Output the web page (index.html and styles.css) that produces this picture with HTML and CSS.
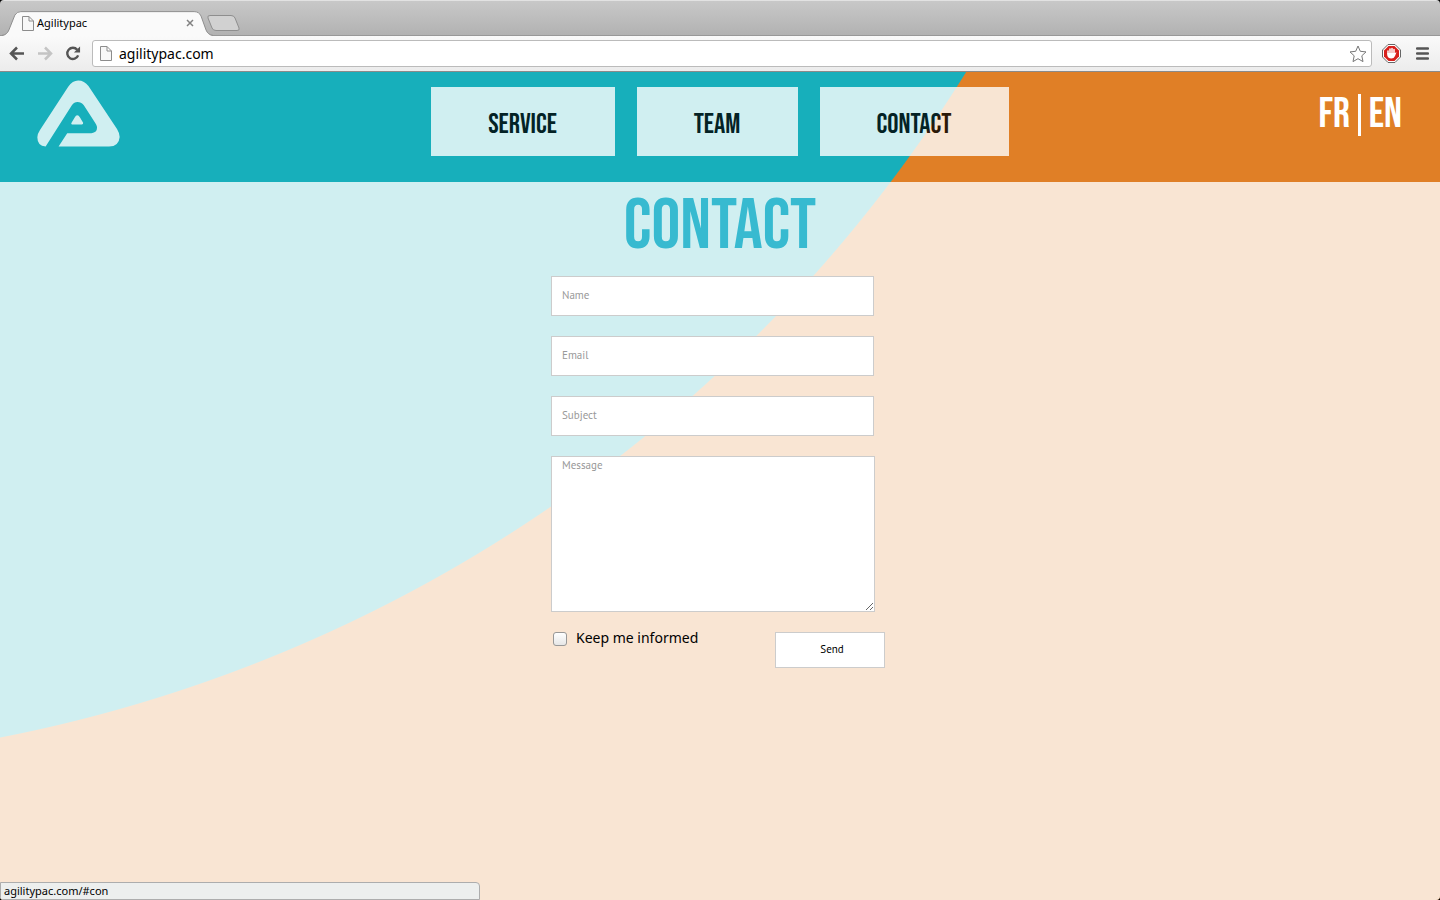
FILE: index.html
```html
<!DOCTYPE html>
<html lang="en">
<head>
  <meta charset="UTF-8" />
  <meta name="viewport" content="width=device-width, initial-scale=1.0" />
  <title>Agilitypac</title>
  <link rel="stylesheet" href="styles.css">
</head>
<body>
  <div class="window">
    <div class="tab-strip">
      <div class="tab">
        <svg class="tab-shape" viewBox="0 0 206 25" aria-hidden="true">
          <path d="M0 25 Q5 24 7 19 L13 4 Q15 .5 19 .5 L194 .5 Q199 .5 201 5 L206 19 Q208 24 213 25 Z" fill="#fafafa"/>
          <path d="M0 24.500 Q5 24 7 19 L13 4 Q15 .5 19 .5 L194 .5 Q199 .5 201 5 L206 19 Q208 24 213 24.500" fill="none" stroke="#8e8e8e"/>
        </svg>
        <svg class="page-icon" viewBox="0 0 12 15" aria-hidden="true">
          <path d="M.5 .5 H7 L11.5 5 V14.5 H.5 Z M7 .5 V5 H11.5" fill="#f7f7f7" stroke="#8c8c8c"/>
        </svg>
        <span class="tab-title">Agilitypac</span>
        <button class="tab-close" aria-label="Close tab">
          <svg viewBox="0 0 8 8"><path d="M1 1 L7 7 M7 1 L1 7" stroke="#828282" stroke-width="1.5"/></svg>
        </button>
      </div>
      <button class="new-tab" aria-label="New tab">
        <svg viewBox="0 0 33 17"><path d="M3 .5 H24 Q27 .5 28 3 L32 13 Q33 15.500 30 15.500 H9 Q6 15.500 5 13 L1 3 Q0 .5 3 .5 Z" fill="#d1d1d1" stroke="#8e8e8e"/></svg>
      </button>
    </div>

    <div class="toolbar">
      <button class="tool" aria-label="Back">
        <svg viewBox="0 0 16 14"><path d="M8 1 L2 7 L8 13 M2 7 H15" fill="none" stroke="#555" stroke-width="2.500"/></svg>
      </button>
      <button class="tool" aria-label="Forward">
        <svg viewBox="0 0 16 14"><path d="M8 1 L14 7 L8 13 M14 7 H1" fill="none" stroke="#c4c4c4" stroke-width="2.500"/></svg>
      </button>
      <button class="tool" aria-label="Reload">
        <svg viewBox="0 0 16 16"><path d="M12.500 4 A6 6 0 1 0 13.500 10" fill="none" stroke="#555" stroke-width="2.500"/><path d="M15.500 .5 V7 H9 Z" fill="#555"/></svg>
      </button>
      <div class="address-bar">
        <svg class="page-icon" viewBox="0 0 12 15" aria-hidden="true">
          <path d="M.5 .5 H7 L11.500 5 V14.500 H.5 Z M7 .5 V5 H11.500" fill="#f7f7f7" stroke="#8c8c8c"/>
        </svg>
        <input type="text" class="address" value="agilitypac.com" aria-label="Address" />
        <button class="star" aria-label="Bookmark">
          <svg viewBox="0 0 18 18"><path d="M9 1 L11.300 6.300 L17 6.900 L12.800 10.800 L14 16.600 L9 13.700 L4 16.600 L5.200 10.800 L1 6.900 L6.700 6.300 Z" fill="#fff" stroke="#777" stroke-linejoin="round"/></svg>
        </button>
      </div>
      <button class="blocker" aria-label="Ad blocker">
        <svg viewBox="0 0 19 19">
          <path d="M6 .5 H13 L18.500 6 V13 L13 18.500 H6 L.5 13 V6 Z" fill="#fff" stroke="#666"/>
          <path d="M6.500 2 H12.500 L17 6.500 V12.500 L12.500 17 H6.500 L2 12.500 V6.500 Z" fill="#d8201c"/>
          <path d="M6 7 V10 M8 5 V10 M10 4.500 V10 M12 5.500 V10" stroke="#fff" stroke-width="1.500" stroke-linecap="round"/>
          <path d="M5.300 9 H12.800 L14.500 8.300 L13 12 Q12 14.500 9.300 14.500 Q6 14.500 5.300 11.500 Z" fill="#fff"/>
        </svg>
      </button>
      <button class="menu" aria-label="Menu">
        <svg viewBox="0 0 13 13"><path d="M1 1.500 H12 M1 6.500 H12 M1 11.500 H12" stroke="#555" stroke-width="2.500" stroke-linecap="round"/></svg>
      </button>
    </div>

    <div class="site">
      <header class="header">
        <a href="#home" class="logo" aria-label="Agilitypac">
          <svg viewBox="51 28 250 201">
            <path fill="#fff" d="M77 228 Q52 226 52 200 Q52 190 60 178 L145 48 Q158 29 175 29 Q194 29 206 46 L292 175 Q300 188 300 199 Q298 227 268 228 L116 228 L142 188 L215 188 Q232 186 232 170 Q231 163 226 156 L192 104 Q184 94 173 94 Q163 94 156 104 Z"/>
            <path fill="#fff" d="M172 134 Q177 134 181 141 L190 156 Q191 161 186 162 L157 162 Q152 161 155 156 L165 140 Q168 134 172 134 Z"/>
          </svg>
        </a>
        <nav class="nav">
          <a href="#service" class="nav-link">SERVICE</a>
          <a href="#team" class="nav-link">TEAM</a>
          <a href="#con" class="nav-link">CONTACT</a>
        </nav>
        <div class="languages">
          <a href="#fr">FR</a>
          <span class="divider"></span>
          <a href="#en">EN</a>
        </div>
      </header>

      <main class="content">
        <h1 class="title">CONTACT</h1>
        <form class="contact-form">
          <input type="text" class="field" placeholder="Name" aria-label="Name" />
          <input type="email" class="field" placeholder="Email" aria-label="Email" />
          <input type="text" class="field" placeholder="Subject" aria-label="Subject" />
          <textarea class="field message" placeholder="Message" aria-label="Message"></textarea>
          <div class="form-footer">
            <input type="checkbox" id="informed" class="checkbox" />
            <label for="informed" class="informed-label">Keep me informed</label>
            <button type="submit" class="send-button">Send</button>
          </div>
        </form>
      </main>
    </div>

    <div class="status-bar">agilitypac.com/#con</div>
  </div>
</body>
</html>
```
FILE: styles.css
```css
* {
  margin: 0;
  padding: 0;
  box-sizing: border-box;
}

body {
  font-family: "Noto Sans", sans-serif;
  background: #000;
  color: #000;
}

button {
  background: none;
  border: none;
}

a {
  color: inherit;
  text-decoration: none;
}

svg {
  display: block;
  width: 100%;
  height: 100%;
}

.window {
  position: relative;
  display: flex;
  flex-direction: column;
  min-height: 100vh;
  border-radius: 4px;
  overflow: hidden;
}

/* Browser tabs */
.tab-strip {
  display: flex;
  align-items: flex-end;
  height: 36px;
  padding-left: 2px;
  background: linear-gradient(#c8c8c8, #b2b2b2);
  border-top: 1px solid #e2e2e2;
  border-bottom: 1px solid #989898;
}

.tab {
  position: relative;
  display: flex;
  align-items: center;
  width: 204px;
  height: 24px;
  padding: 0 12px 0 20px;
}

.tab-shape {
  position: absolute;
  left: 0;
  bottom: -1px;
  height: 25px;
  overflow: visible;
}

.page-icon {
  position: relative;
  flex: none;
  width: 12px;
  height: 15px;
}

.tab-title {
  position: relative;
  flex: 1;
  margin-left: 3px;
  font-size: 11px;
  line-height: 16px;
}

.tab-close {
  position: relative;
  width: 8px;
  height: 8px;
}

.new-tab {
  width: 33px;
  height: 17px;
  margin: 0 0 3px 1px;
}

/* Browser toolbar */
.toolbar {
  display: flex;
  align-items: center;
  height: 36px;
  padding: 0 11px 0 9px;
  background: linear-gradient(#fafafa, #ececec);
  border-bottom: 1px solid #8a8a8a;
}

.tool {
  width: 16px;
  height: 15px;
  margin-right: 12px;
}

.address-bar {
  flex: 1;
  display: flex;
  align-items: center;
  height: 27px;
  margin-left: -1px;
  padding: 0 4px 0 7px;
  background: #fff;
  border: 1px solid #bbb;
  border-radius: 3px;
}

.address {
  flex: 1;
  margin-left: 7px;
  border: none;
  outline: none;
  font-family: inherit;
  font-size: 14px;
}

.star {
  width: 18px;
  height: 18px;
}

.blocker {
  width: 19px;
  height: 19px;
  margin: 0 15px 0 10px;
}

.menu {
  width: 13px;
  height: 13px;
}

/* The curve between both colours runs under the header and the content */
.site {
  flex: 1;
  display: flex;
  flex-direction: column;
  background: radial-gradient(circle at -280px -775px, #17afbb 1467px, #e07f26 1468px);
}

.header {
  display: grid;
  grid-template-columns: 1fr 578px 1fr;
  align-items: start;
  height: 110px;
  padding: 0 38px 0 37px;
  font-family: "Bebas Neue", "Liberation Sans Narrow", "Liberation Sans", sans-serif;
}

.logo {
  width: 83px;
  height: 67px;
  margin-top: 8px;
  opacity: 0.8;
}

.nav {
  display: grid;
  grid-template-columns: 184fr 161fr 189fr;
  gap: 22px;
  margin-top: 15px;
}

.nav-link {
  height: 69px;
  background: #fff;
  font-size: 28px;
  line-height: 75px;
  text-align: center;
  opacity: 0.8;
}

.languages {
  justify-self: end;
  display: flex;
  align-items: center;
  gap: 8px;
  margin-top: 21px;
  color: #fff;
  font-size: 42px;
  line-height: 44px;
}

.divider {
  width: 3px;
  height: 42px;
  background: #fff;
}

/* Contact form */
.content {
  flex: 1;
  background: rgba(255, 255, 255, 0.8);
}

.title {
  height: 94px;
  color: #37bad0;
  font-family: "Bebas Neue", "Liberation Sans Narrow", "Liberation Sans", sans-serif;
  font-size: 72px;
  font-weight: 400;
  line-height: 90px;
  text-align: center;
}

.contact-form {
  display: flex;
  flex-direction: column;
  gap: 20px;
  max-width: 338px;
  margin: 0 auto;
}

.field {
  width: 323px;
  height: 40px;
  padding: 0 10px 2px;
  background: #fff;
  border: 1px solid #ccc;
  outline: none;
  font-family: "PT Sans", "Noto Sans", sans-serif;
  font-size: 11px;
}

.field::placeholder {
  color: #999;
}

.message {
  width: 324px;
  height: 156px;
  padding: 1px 10px;
}

.form-footer {
  display: flex;
  align-items: flex-start;
  padding: 0 4px 0 2px;
}

.checkbox {
  appearance: none;
  width: 14px;
  height: 14px;
  background: linear-gradient(#fff, #e6e6e6);
  border: 1px solid #989898;
  border-radius: 3px;
}

.checkbox:checked {
  background: #37bad0;
}

.informed-label {
  flex: 1;
  margin-left: 9px;
  font-size: 14px;
  line-height: 12px;
}

.send-button {
  width: 110px;
  height: 36px;
  padding: 0 0 2px 4px;
  background: #fff;
  border: 1px solid #ccc;
  font-family: "PT Sans", "Noto Sans", sans-serif;
  font-size: 11px;
  cursor: pointer;
}

.status-bar {
  position: absolute;
  left: 0;
  bottom: 0;
  width: 480px;
  height: 18px;
  padding-left: 3px;
  background: #edefee;
  border: 1px solid #adadad;
  border-top-right-radius: 4px;
  font-size: 11px;
  line-height: 16px;
}
```
